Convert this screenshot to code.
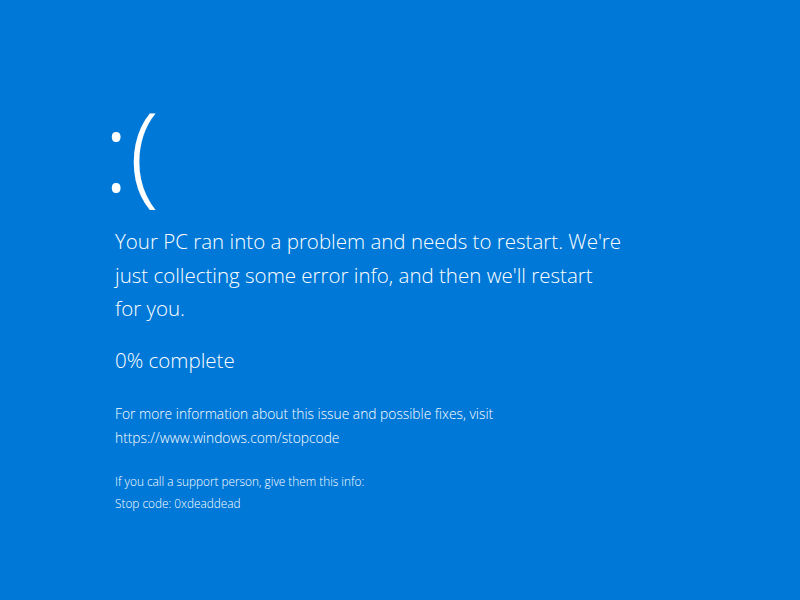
import React from "react";

export default function App() {
  return (
    <div
      className="w-[800px] h-[600px] bg-[#0078d7] text-white overflow-hidden pl-[115px] pt-[83px]"
      style={{ fontFamily: '"Open Sans", "Noto Sans", sans-serif' }}
    >
      {/* sad face */}
      <div className="text-[110px] leading-[132px] font-light -ml-[12px] h-[132px]">:(</div>

      <div className="mt-[10px] text-[20.5px] leading-[33.5px] font-light whitespace-nowrap">
        <p>Your PC ran into a problem and needs to restart. We're</p>
        <p>just collecting some error info, and then we'll restart</p>
        <p>for you.</p>
      </div>

      <div className="mt-[18px] text-[20.5px] leading-[33.5px] font-light">0% complete</div>

      <div className="mt-[25px] text-[13.8px] leading-[24px] font-light">
        <p>For more information about this issue and possible fixes, visit</p>
        <p>https://www.windows.com/stopcode</p>
      </div>

      <div className="mt-[20px] text-[11.8px] leading-[22px] font-light">
        <p>If you call a support person, give them this info:</p>
        <p>Stop code: 0xdeaddead</p>
      </div>
    </div>
  );
}
